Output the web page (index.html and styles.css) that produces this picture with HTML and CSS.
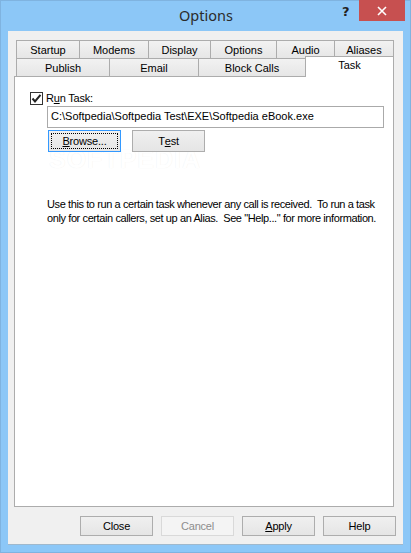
FILE: index.html
```html
<!DOCTYPE html>
<html>
<head>
<meta charset="utf-8">
<link rel="stylesheet" href="styles.css">
</head>
<body>
<div class="window">
  <div class="titlebar">
    <div class="title">Options</div>
    <div class="help">?</div>
    <div class="close">
      <svg width="12" height="12" viewBox="0 0 12 12"><path d="M2 2 L10 10 M10 2 L2 10" stroke="#fff" stroke-width="1.6"/></svg>
    </div>
  </div>
  <div class="client">
    <div class="tabs">
      <div class="row back">
        <div class="tab w-startup">Startup</div>
        <div class="tab w-modems">Modems</div>
        <div class="tab w-display">Display</div>
        <div class="tab w-options">Options</div>
        <div class="tab w-audio">Audio</div>
        <div class="tab w-aliases">Aliases</div>
      </div>
      <div class="row front">
        <div class="tab w-publish">Publish</div>
        <div class="tab w-email">Email</div>
        <div class="tab w-block">Block Calls</div>
        <div class="tab selected">Task</div>
      </div>
      <div class="panel">
        <div class="watermark" aria-hidden="true">SOFTPEDIA</div>
        <div class="check-row">
          <div class="checkbox">
            <svg width="11" height="11" viewBox="0 0 11 11"><path d="M1.5 5.5 L4 8.5 L9.5 1.8" fill="none" stroke="#222" stroke-width="2"/></svg>
          </div>
          <span class="label">R<u>u</u>n Task:</span>
        </div>
        <div class="input">C:\Softpedia\Softpedia Test\EXE\Softpedia eBook.exe</div>
        <div class="btn-row">
          <div class="btn focus"><span class="focus-rect"><u>B</u>rowse...</span></div>
          <div class="btn">T<u>e</u>st</div>
        </div>
        <p class="desc">Use this to run a certain task whenever any call is received.&nbsp; To run a task only for certain callers, set up an Alias.&nbsp; See "Help..." for more information.</p>
      </div>
    </div>
    <div class="footer">
      <div class="btn big">Close</div>
      <div class="btn big disabled">Cancel</div>
      <div class="btn big"><u>A</u>pply</div>
      <div class="btn big">Help</div>
    </div>
  </div>
</div>
</body>
</html>
```
FILE: styles.css
```css
* { box-sizing: border-box; }
html, body { margin: 0; padding: 0; }
body { width: 411px; height: 553px; overflow: hidden; font-family: "Liberation Sans", Arial, sans-serif; }

.window {
  width: 411px; height: 553px;
  background: #8cc7f7;
  border: 1px solid #7fb3e0;
  display: flex; flex-direction: column;
}
.titlebar {
  height: 30px; position: relative;
  display: flex; align-items: center; justify-content: center;
}
.title {
  font-family: "Noto Sans", "Open Sans", sans-serif;
  font-size: 14.5px; color: #2b2b2b; margin-top: -2px; margin-left: 1px;
}
.help {
  position: absolute; left: 341px; top: 3px;
  font-family: "DejaVu Sans", sans-serif; font-weight: bold; font-size: 13px; color: #222;
}
.close {
  position: absolute; left: 358px; top: -1px; width: 46px; height: 21px;
  background: #c75050;
  display: flex; align-items: center; justify-content: center;
}

.client {
  margin: 0 7px 0 7px;
  width: 395px; height: 514px;
  background: #f0f0f0;
  border-bottom: 1px solid #9fb8cc;
  padding: 9px 0 0 6px;
  display: flex; flex-direction: column;
}

.tabs { width: 380px; display: flex; flex-direction: column; }
.row { display: flex; padding-left: 2px; height: 18px; align-items: flex-end; }
.tab {
  height: 18px;
  background: linear-gradient(#f2f2f2, #e6e6e6);
  border: 1px solid #acacac; border-bottom: none;
  margin-right: -1px;
  font-size: 11px; color: #000;
  display: flex; align-items: center; justify-content: center;
  padding-top: 1px;
}
.w-startup { width: 64px; }
.w-modems { width: 70px; }
.w-display { width: 63px; }
.w-options { width: 67px; }
.w-audio { width: 59px; }
.w-aliases { width: 60px; }
.w-publish { width: 94px; }
.w-email { width: 90px; }
.w-block { width: 108px; }
.front { position: relative; z-index: 2; }
.tab.selected {
  width: 89px; height: 21px; margin-bottom: -1px;
  background: #fff; border-color: #acacac;
  align-items: flex-start; padding-top: 2px;
  margin-right: 0;
}

.panel {
  position: relative;
  height: 431px; background: #fff;
  border: 1px solid #acacac;
  padding: 14px 0 0 15px;
  font-size: 11px; color: #000;
}
.check-row { position: relative; display: flex; align-items: center; height: 14px; }
.checkbox {
  width: 13px; height: 13px; border: 1px solid #333; background: #fff;
  display: flex; align-items: center; justify-content: center;
}
.label { margin-left: 3px; letter-spacing: -0.2px; }
.input {
  position: relative;
  margin: 1px 0 0 17px;
  width: 337px; height: 22px;
  border: 1px solid #aaa; background: #fff;
  padding: 3px 0 0 3px;
  letter-spacing: 0;
  white-space: nowrap;
}
.btn-row { position: relative; display: flex; gap: 11px; margin: 2px 0 0 18px; }
.btn {
  width: 73px; height: 22px;
  border: 1px solid #adadad;
  background: linear-gradient(#f0f0f0, #e5e5e5);
  display: flex; align-items: center; justify-content: center;
  font-size: 11px; color: #000;
  letter-spacing: -0.2px;
}
.btn.focus { border-color: #3399ff; padding: 2px; }
.focus-rect {
  flex: 1; align-self: stretch;
  border: 1px dotted #000;
  display: flex; align-items: center; justify-content: center;
}
.desc {
  position: relative;
  margin: 45px 0 0 17px;
  width: 338px;
  line-height: 14px;
  letter-spacing: -0.4px;
}
.watermark {
  position: absolute; left: 34px; top: 68px;
  font-size: 25px; font-weight: bold; letter-spacing: 1px;
  color: #fff;
  text-shadow: 0 0 1px #ececec;
  pointer-events: none;
}

.footer {
  display: flex; margin-top: 9px; padding-left: 66px; gap: 8px;
}
.btn.big { height: 20px; width: 73px; }
.btn.disabled { border-color: #d9d9d9; color: #8d8d8d; background: #f4f4f4; }
```
